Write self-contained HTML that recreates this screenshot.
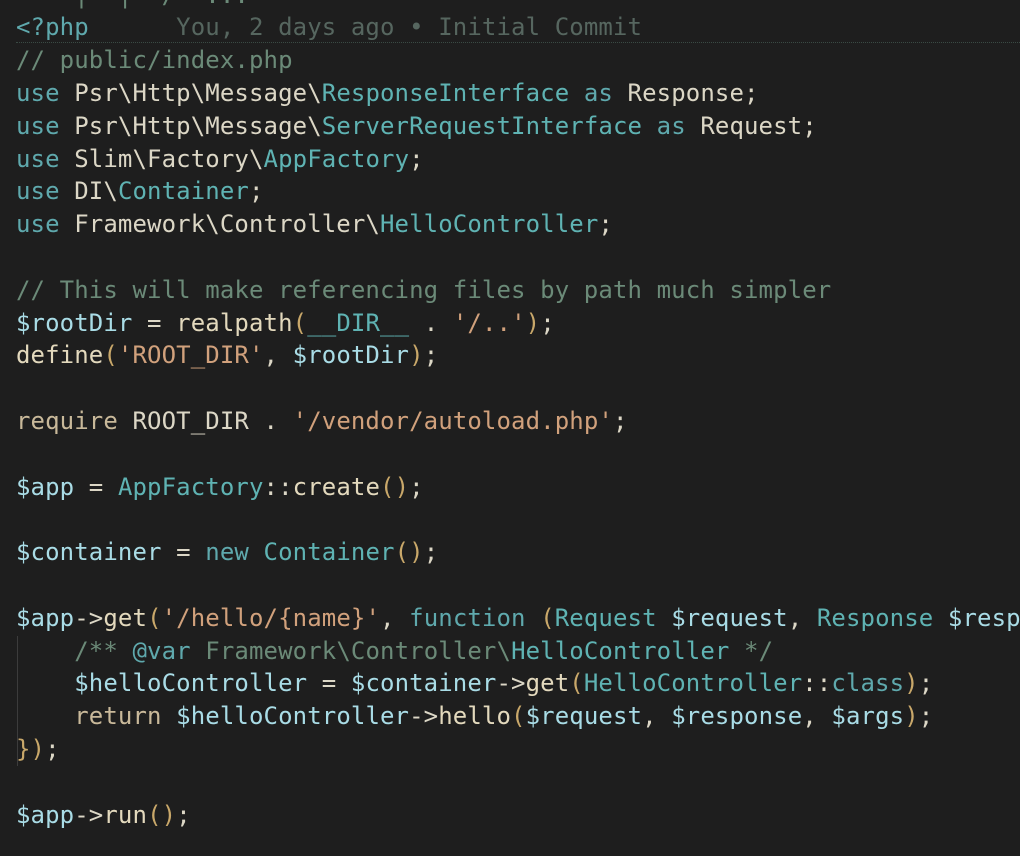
<!DOCTYPE html>
<html><head><meta charset="utf-8"><style>
html,body{margin:0;padding:0;background:#1e1e1e;overflow:hidden;width:1020px;height:856px}
pre{margin:0;position:absolute;left:16px;top:-21.4px;width:1004px;overflow:hidden;font-family:"DejaVu Sans Mono","Liberation Mono",monospace;font-size:24px;line-height:32.8px;letter-spacing:0.11px;color:#dcd7c6;white-space:pre}
.k{color:#5fa9ad}.c{color:#6b8a78}.s{color:#d1a17c}.v{color:#a9dce6}.p{color:#c9a86a}.t{color:#5fb3b3}.f{color:#e3d9bd}.b{color:#56665f}
.ul{position:absolute;left:16px;top:42px;width:1004px;border-top:1px dotted #3a4a44}
.g{position:absolute;left:17px;top:636px;width:1px;height:130px;background:#3c3c3c}
</style></head><body>
<div class="ul"></div><div class="g"></div>
<pre><span class="c">    |  |  /  ...</span>
<span class="k">&lt;?php</span>      <span class="b">You, 2 days ago • Initial Commit</span>
<span class="c">// public/index.php</span>
<span class="k">use</span> Psr\Http\Message\<span class="t">ResponseInterface</span> <span class="k">as</span> Response;
<span class="k">use</span> Psr\Http\Message\<span class="t">ServerRequestInterface</span> <span class="k">as</span> Request;
<span class="k">use</span> Slim\Factory\<span class="t">AppFactory</span>;
<span class="k">use</span> DI\<span class="t">Container</span>;
<span class="k">use</span> Framework\Controller\<span class="t">HelloController</span>;

<span class="c">// This will make referencing files by path much simpler</span>
<span class="v">$rootDir</span> = <span class="f">realpath</span><span class="p">(</span><span class="t">__DIR__</span> . <span class="s">'/..'</span><span class="p">)</span>;
<span class="f">define</span><span class="p">(</span><span class="s">'ROOT_DIR'</span>, <span class="v">$rootDir</span><span class="p">)</span>;

<span class="s" style="color:#c9b99a">require</span> ROOT_DIR . <span class="s">'/vendor/autoload.php'</span>;

<span class="v">$app</span> = <span class="t">AppFactory</span>::<span class="f">create</span><span class="p">()</span>;

<span class="v">$container</span> = <span class="k">new</span> <span class="t">Container</span><span class="p">()</span>;

<span class="v">$app</span>-&gt;<span class="f">get</span><span class="p">(</span><span class="s">'/hello/{name}'</span>, <span class="k">function</span> <span class="p">(</span><span class="t">Request</span> <span class="v">$request</span>, <span class="t">Response</span> <span class="v">$respo</span>
    <span class="c">/** <span class="k">@var</span> Framework\Controller\<span class="t">HelloController</span> */</span>
    <span class="v">$helloController</span> = <span class="v">$container</span>-&gt;<span class="f">get</span><span class="p">(</span><span class="t">HelloController</span>::<span class="k">class</span><span class="p">)</span>;
    <span class="s" style="color:#c9b99a">return</span> <span class="v">$helloController</span>-&gt;<span class="f">hello</span><span class="p">(</span><span class="v">$request</span>, <span class="v">$response</span>, <span class="v">$args</span><span class="p">)</span>;
<span class="p">})</span>;

<span class="v">$app</span>-&gt;<span class="f">run</span><span class="p">()</span>;
</pre>
</body></html>
